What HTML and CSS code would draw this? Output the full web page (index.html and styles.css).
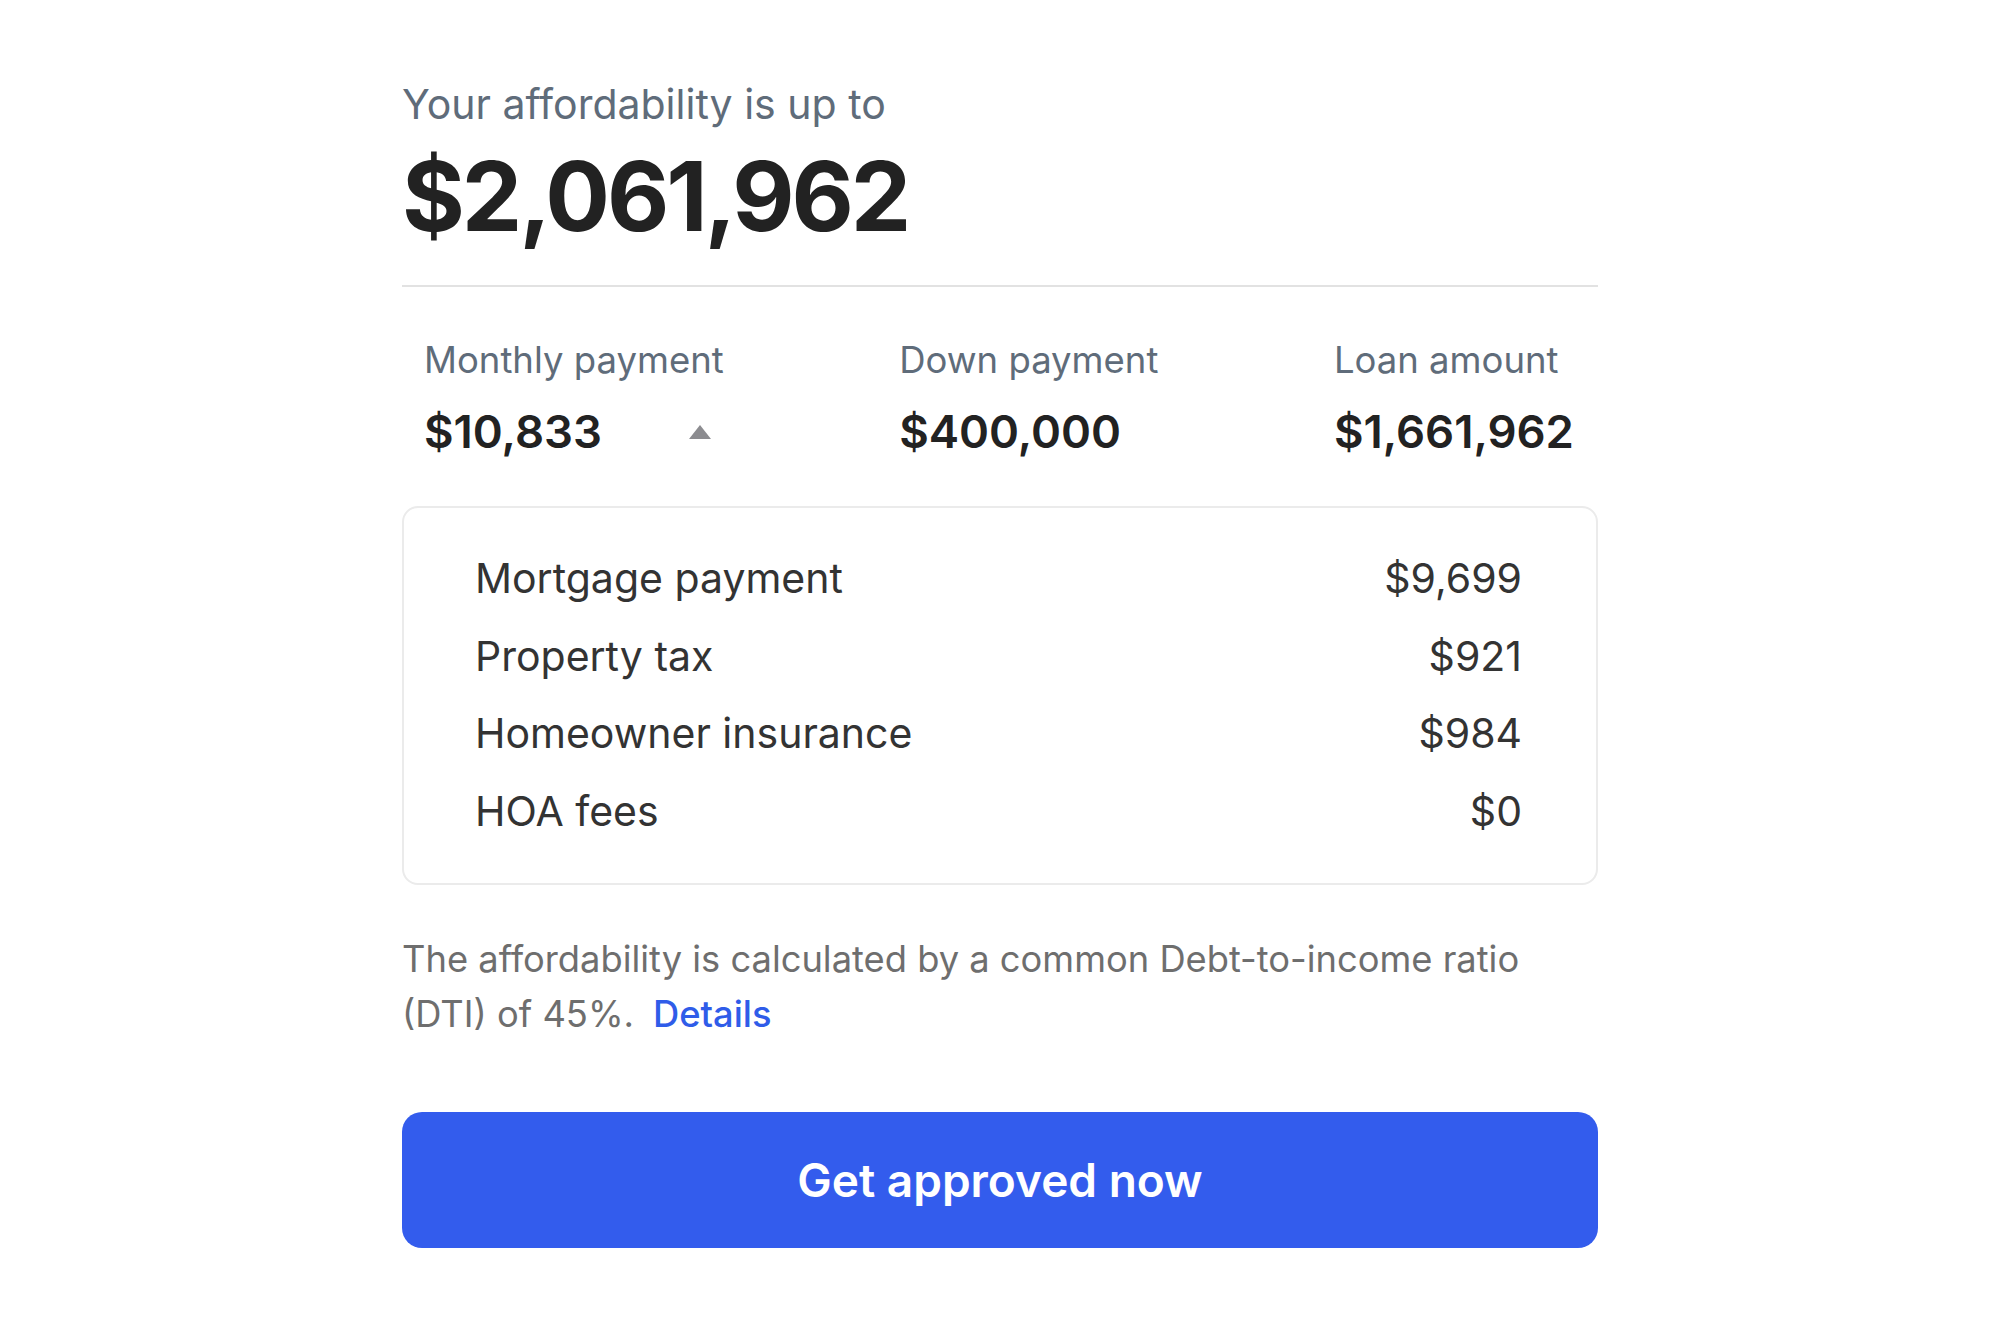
FILE: index.html
```html
<!DOCTYPE html>
<html lang="en">
<head>
<meta charset="utf-8">
<title>Affordability</title>
<link rel="stylesheet" href="styles.css">
</head>
<body>
<main class="card">
  <p class="eyebrow">Your affordability is up to</p>
  <h1 class="total">$2,061,962</h1>
  <hr class="divider">
  <section class="stats">
    <div class="stat">
      <div class="stat-label">Monthly payment</div>
      <div class="stat-value">
        <span>$10,833</span>
        <svg class="caret" width="22" height="14" viewBox="0 0 22 14" aria-hidden="true"><path d="M11 0 L22 14 L0 14 Z" fill="#8c8c90"/></svg>
      </div>
    </div>
    <div class="stat">
      <div class="stat-label">Down payment</div>
      <div class="stat-value"><span>$400,000</span></div>
    </div>
    <div class="stat">
      <div class="stat-label">Loan amount</div>
      <div class="stat-value"><span>$1,661,962</span></div>
    </div>
  </section>
  <section class="breakdown">
    <div class="row"><span>Mortgage payment</span><span>$9,699</span></div>
    <div class="row"><span>Property tax</span><span>$921</span></div>
    <div class="row"><span>Homeowner insurance</span><span>$984</span></div>
    <div class="row"><span>HOA fees</span><span>$0</span></div>
  </section>
  <div class="note">
    <span class="note-line">The affordability is calculated by a common Debt-to-income ratio</span>
    <span class="note-line"><span>(DTI) of 45%.</span><a class="details" href="#">Details</a></span>
  </div>
  <button class="cta" type="button">Get approved now</button>
</main>
</body>
</html>
```
FILE: styles.css
```css
* { box-sizing: border-box; }
html, body { margin: 0; padding: 0; background: #ffffff; }
body {
  font-family: Inter, "Noto Sans", "Liberation Sans", sans-serif;
  color: #222222;
}
.card {
  width: 1196px;
  margin: 0 auto;
  padding-top: 80px;
}
.eyebrow {
  margin: 0;
  font-size: 41px;
  line-height: 48px;
  color: #5f6c7a;
  font-weight: 400;
}
.total {
  margin: 11px 0 0;
  font-size: 96px;
  line-height: 115px;
  font-weight: 700;
  color: #222222;
  letter-spacing: -3.1px;
}
.divider {
  margin: 31px 0 0;
  border: 0;
  border-top: 2px solid #e2e2e2;
  height: 0;
}
.stats {
  display: flex;
  justify-content: space-between;
  padding: 0 24px 0 22px;
  margin-top: 50px;
}
.stat-label {
  font-size: 36.5px;
  line-height: 46px;
  color: #5f6c7a;
}
.stat-value {
  display: flex;
  align-items: center;
  margin-top: 23px;
  font-size: 45.5px;
  line-height: 52px;
  font-weight: 600;
  color: #222222;
}
.caret { margin-left: 87px; }
.breakdown {
  display: flex;
  flex-direction: column;
  gap: 17.5px;
  margin-top: 48px;
  border: 2px solid #ebebeb;
  border-radius: 16px;
  padding: 40px 74px 42px 71px;
}
.row {
  display: flex;
  justify-content: space-between;
  font-size: 41px;
  line-height: 60px;
  color: #333333;
}
.note {
  display: flex;
  flex-direction: column;
  margin: 47px 0 0;
  font-size: 36.3px;
  line-height: 55px;
  color: #6e6e6e;
}
.note-line { display: block; white-space: nowrap; }
.details {
  margin-left: 19px;
  color: #2f5ce9;
  font-weight: 500;
  text-decoration: none;
}
.cta {
  display: block;
  width: 100%;
  height: 136px;
  margin-top: 70px;
  border: 0;
  border-radius: 20px;
  background: #335ced;
  color: #ffffff;
  font-family: Inter, "Noto Sans", "Liberation Sans", sans-serif;
  font-size: 46px;
  font-weight: 600;
  cursor: pointer;
}
```
